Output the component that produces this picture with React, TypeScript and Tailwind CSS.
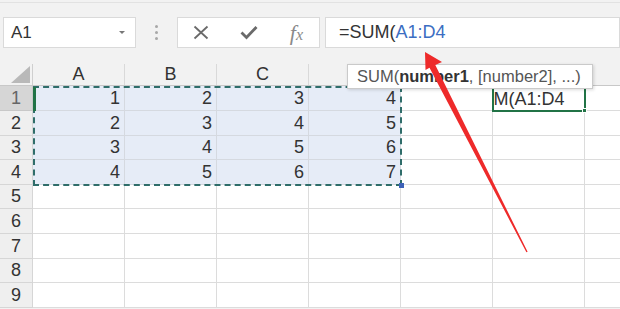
const cols = ["A", "B", "C", "D", "E", "F", "G"];
const rowHeights = [25, 25, 24, 25, 24, 25, 25, 24, 25];
const data = [
  [1, 2, 3, 4],
  [2, 3, 4, 5],
  [3, 4, 5, 6],
  [4, 5, 6, 7],
];

function NameBox() {
  return (
    <div className="w-[133px] h-[31px] shrink-0 bg-white border border-[#dadada] flex items-center justify-between pl-[7px] pr-[9px]">
      <span className="text-[17px] text-[#333]">A1</span>
      <svg width="8" height="5" viewBox="0 0 8 5">
        <path d="M1 1 L4 4 L7 1 Z" fill="#777" />
      </svg>
    </div>
  );
}

function FormulaButtons() {
  return (
    <div className="w-[143px] h-[31px] shrink-0 bg-white border border-[#dadada] flex items-center justify-between pl-[15px] pr-[16px]">
      <svg width="16" height="15" viewBox="0 0 16 15">
        <path d="M1.5 1.5 L14.5 13.5 M14.5 1.5 L1.5 13.5" stroke="#6a6a6a" strokeWidth="1.8" />
      </svg>
      <svg width="18" height="15" viewBox="0 0 18 15">
        <path d="M1.5 7.5 L6.5 12.5 L16.5 2" stroke="#6a6a6a" strokeWidth="2.8" fill="none" />
      </svg>
      <span className="text-[22px] italic text-[#8a8a8a] font-['Liberation_Serif',serif] leading-none">
        f<span className="text-[16px]">x</span>
      </span>
    </div>
  );
}

function ColumnHeader() {
  return (
    <div className="flex h-[22px] border-b border-[#c8c8c8]">
      <div className="w-[33px] shrink-0 h-full border-r border-[#cfcfcf] flex items-end justify-end pr-[2px] pb-[2px]">
        <svg width="19" height="17" viewBox="0 0 19 17">
          <path d="M19 0 L19 17 L0 17 Z" fill="#b9b9b9" />
        </svg>
      </div>
      {cols.map((c) => (
        <div
          key={c}
          className={
            c === "F"
              ? "w-[92px] shrink-0 h-full bg-[#d8d8d8] border-r border-[#cfcfcf] flex items-center justify-center text-[18px] text-[#333]"
              : "w-[92px] shrink-0 h-full border-r border-[#d9d9d9] flex items-center justify-center text-[18px] text-[#333]"
          }
        >
          {c}
        </div>
      ))}
    </div>
  );
}

function Row({ index, height }: { index: number; height: number }) {
  const values = data[index];
  return (
    <div className="flex" style={{ height }}>
      <div
        className={
          index === 0
            ? "w-[33px] shrink-0 h-full bg-[#d6d6d6] border-r border-b border-[#c8c8c8] flex items-center justify-center text-[18px] text-[#666]"
            : "w-[33px] shrink-0 h-full bg-[#efefef] border-r border-b border-[#d6d6d6] flex items-center justify-center text-[18px] text-[#333]"
        }
      >
        {index + 1}
      </div>
      {cols.map((c, ci) => {
        const selected = values && ci < 4;
        return (
          <div
            key={c}
            className={
              selected
                ? "w-[92px] shrink-0 h-full bg-[#e6ecf7] border-r border-b border-[#d5d9e0] flex items-center justify-end pr-[4px] text-[18px] text-[#333]"
                : "w-[92px] shrink-0 h-full bg-white border-r border-b border-[#dcdcdc] flex items-center justify-end pr-[4px] text-[18px] text-[#333]"
            }
          >
            {selected ? values[ci] : ""}
          </div>
        );
      })}
    </div>
  );
}

function Arrow() {
  return (
    <svg className="absolute left-0 top-0 pointer-events-none" width="620" height="309" viewBox="0 0 620 309">
      <polygon points="425,52 442,62 435.3,65 527.6,251.8 526.4,252.2 429.5,67.7 425.5,70" fill="#ee2a2a" />
    </svg>
  );
}

export default function App() {
  return (
    <div className="relative w-[620px] h-[309px] overflow-hidden bg-[#f2f2f2] font-['Liberation_Sans',Arial,sans-serif]">
      <div className="h-[3px] border-b border-[#e2e2e2]" />
      <div className="h-[61px] flex items-start pt-[14px] pl-[3px]">
        <NameBox />
        <div className="w-[41px] shrink-0 h-[31px] flex flex-col items-center justify-center gap-[3px]">
          <div className="w-[3px] h-[3px] rounded-full bg-[#a8a8a8]" />
          <div className="w-[3px] h-[3px] rounded-full bg-[#a8a8a8]" />
          <div className="w-[3px] h-[3px] rounded-full bg-[#a8a8a8]" />
        </div>
        <FormulaButtons />
        <div className="flex-1 ml-[5px] h-[31px] bg-white border border-[#dadada] flex items-center pl-[13px] text-[18px] text-[#333]">
          =SUM(<span className="text-[#3b6ec2]">A1:D4</span>
        </div>
      </div>

      <ColumnHeader />
      {rowHeights.map((h, i) => (
        <Row key={i} index={i} height={h} />
      ))}

      {/* copy/selection marquee */}
      <div className="absolute left-[33px] top-[86px] w-[369px] h-[100px] border-2 border-dashed border-[#2f6d6a]" />
      <div className="absolute left-[33px] top-[87px] w-[3px] h-[24px] bg-[#217346]" />
      <div className="absolute left-[399px] top-[183px] w-[5px] h-[5px] bg-[#3d62b8]" />

      {/* active cell F1 */}
      <div className="absolute left-[492px] top-[86px] w-[94px] h-[26px] border-2 border-[#217346] overflow-hidden flex items-center bg-white">
        <span className="ml-[-36px] text-[18px] text-[#333] whitespace-nowrap">=SUM(A1:D4</span>
      </div>
      <div className="absolute left-[582px] top-[108px] w-[5px] h-[5px] bg-[#217346] border border-white" />

      {/* function tooltip */}
      <div className="absolute left-[347px] top-[64px] w-[246px] h-[25px] bg-white border border-[#cacaca] shadow-[1px_1px_3px_rgba(0,0,0,0.15)] flex items-center pl-[9px] text-[16.5px] text-[#555] whitespace-nowrap">
        SUM(<span className="font-bold text-[#333]">number1</span>, [number2], ...)
      </div>

      <Arrow />
    </div>
  );
}
